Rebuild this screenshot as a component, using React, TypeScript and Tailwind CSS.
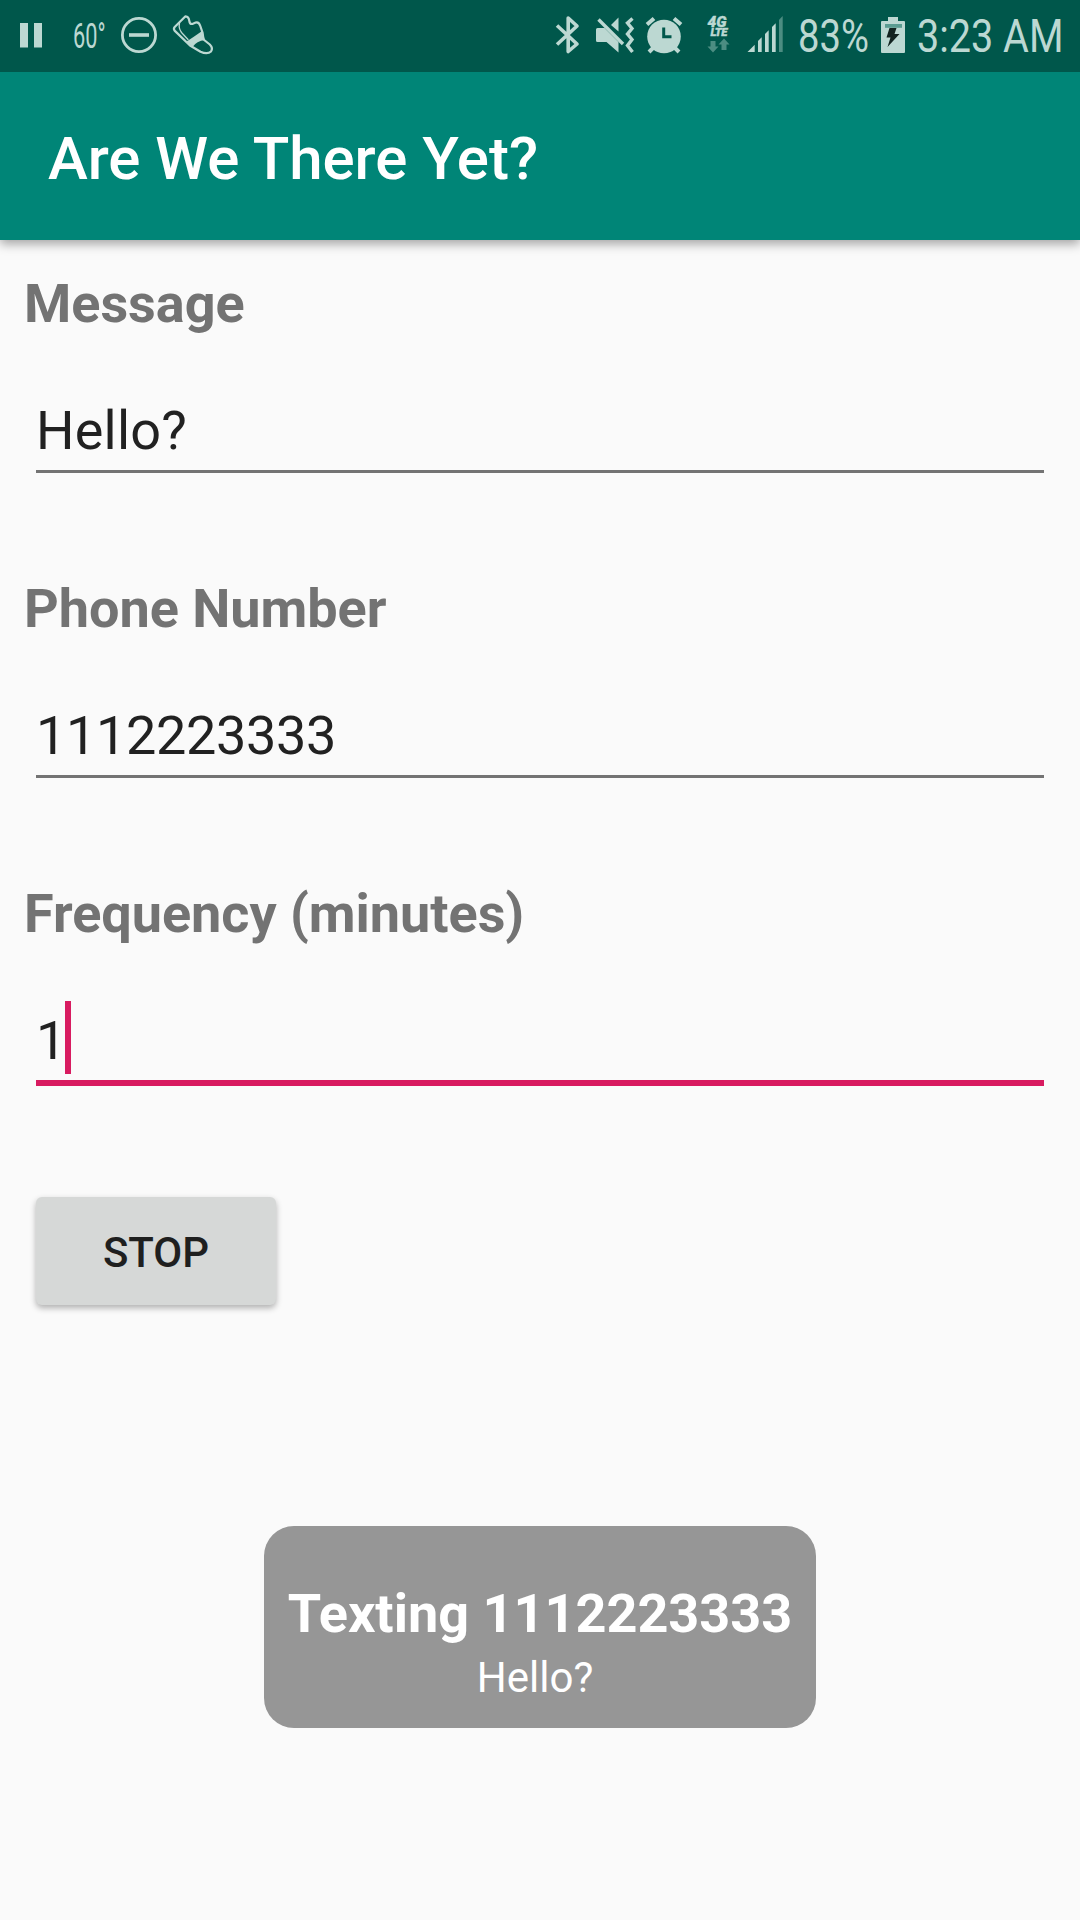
import React from "react";

function Icon({ x, w, className, children }: { x: number; w: number; className?: string; children: React.ReactNode }) {
  return (
    <svg className={"h-[72px] shrink-0 " + (className ?? "")} width={w} height={72} viewBox={`${x} 0 ${w} 72`} fill="#bcd8d2">
      {children}
    </svg>
  );
}

function StatusBar() {
  return (
    <header className="relative z-10 flex h-[72px] items-start justify-between bg-[#00574b] text-[#bcd8d2]">
      <div className="flex">
        <Icon x={0} w={73}>
          <rect x="20" y="23" width="8" height="24.5" />
          <rect x="34" y="23" width="8" height="24.5" />
        </Icon>
        <span className="block h-[72px] w-[45px] origin-left scale-x-[0.62] whitespace-nowrap text-[35px] leading-[73px]">60°</span>
        <Icon x={118} w={47}>
          <circle cx="139" cy="35" r="16.6" fill="none" stroke="#bcd8d2" strokeWidth="2.8" />
          <rect x="129" y="33.2" width="20" height="3.6" />
        </Icon>
        <Icon x={165} w={55}>
          <g fill="none" stroke="#bcd8d2" strokeWidth="2.2" strokeLinejoin="round" strokeLinecap="round">
            <path d="M185.5 16.3 L174.7 27 Q173.2 28.8 174.6 30.6 L190 45.5 L200.5 51.8 Q207.5 54.8 211 51.5 Q213.3 48 209.8 44.5 L203.5 39.5 L202.6 32.8 L200.3 26 Q198.8 21.6 195.6 22.6 L192.4 24 Q189.6 24.2 189.3 20.8 Q188.8 16.6 185.5 16.3Z" />
            <path strokeWidth="1.3" d="M179.5 23.5 Q178.3 28 181.5 32.5 L188 39.5" />
          </g>
          <path d="M202 31 L205 40 Q196.500 41 192.500 47 L186.500 41.5 Q193 37.500 202 31Z" />
        </Icon>
      </div>
      <div className="flex pr-[14px]">
        <Icon x={550} w={42}>
          <path fill="none" stroke="#bcd8d2" strokeWidth="3.6" strokeLinejoin="round" d="M557 25.5 L577 44 L568.2 51.5 V18 L577 26 L557 44.5" />
        </Icon>
        <Icon x={592} w={48}>
          <path d="M596 29.5 Q596 28 597.5 28 H604.5 L618.5 42 V52.5 L606.5 42 H597.5 Q596 42 596 40.5Z" />
          <path d="M611 25 L618.5 17.5 V31.5Z" />
          <path stroke="#bcd8d2" strokeWidth="3.4" d="M598.5 19.5 L623 44" />
          <path fill="none" stroke="#bcd8d2" strokeWidth="3.4" d="M632.5 18.5 L627.5 23 L632 28.5 L627.5 34 L632 39.5 L627.5 45.5 L632.5 52" />
        </Icon>
        <Icon x={640} w={60}>
          <circle cx="664" cy="36.5" r="16.8" />
          <path stroke="#bcd8d2" strokeWidth="4" d="M647 24.5 L654 18.5 M674 18.5 L681 24.5 M649 52 L654 47 M679 52 L674 47" />
          <path fill="none" stroke="#00574b" strokeWidth="3" d="M663.7 27.5 V36.7 H671.5" />
        </Icon>
        <Icon x={700} w={44}>
          <text fontFamily="Roboto" fontWeight="900" fontStyle="italic" stroke="#bcd8d2" strokeWidth="0.4">
            <tspan x="707.5" y="27" fontSize="15.5">4G</tspan>
            <tspan x="710.5" y="36" fontSize="11.3" letterSpacing="-0.5">LTE</tspan>
          </text>
          <g fill="#4c8d82">
            <path d="M710.5 41 H715.5 V46.5 H718.5 L713 52.5 L707.5 46.5 H710.5Z" />
            <path d="M721.5 50 H726.5 V44.5 H729.5 L724 38.5 L718.5 44.5 H721.5Z" />
          </g>
        </Icon>
        <Icon x={744} w={54}>
          <path d="M747.5 52 L754.7 44.7 V52Z M758 52 V41 L761.7 37.3 V52Z M765 52 V34 L768.7 30.3 V52Z M772 52 V27 L775.7 23.3 V52Z" />
          <path fill="#4c8d82" d="M779 52 V19.8 L782.7 16 V52Z" />
        </Icon>
        <span className="block h-[72px] w-[80px] origin-left scale-x-[0.83] text-[46px] leading-[73px]">83%</span>
        <Icon x={878} w={39}>
          <path d="M888 17 H898 V21 H904 Q905 21 905 22 V52 Q905 53 904 53 H882 Q881 53 881 52 V22 Q881 21 882 21 H888Z" />
          <rect x="885" y="24" width="17" height="3.8" fill="#5a9c91" />
          <path fill="#12231f" d="M889.5 28 H896.5 L894.5 34 H899.5 L887.5 47 L890.5 37.5 H886.5Z" />
        </Icon>
        <span className="block h-[72px] w-[149px] origin-left scale-x-[0.86] whitespace-nowrap text-[46px] leading-[73px]">3:23 AM</span>
      </div>
    </header>
  );
}

function Field({ label, value, focused = false, valueClass = "" }: { label: string; value: string; focused?: boolean; valueClass?: string }) {
  return (
    <section>
      <h2 className="px-6 text-[54px] leading-[63px] font-bold tracking-[-0.03px] text-[#737373]">{label}</h2>
      <div className={"mx-9 mt-16 flex h-[71px] box-content " + (focused ? "border-b-6 border-[#d81b60]" : "border-b-3 border-[#737373]")}>
        <span className={"text-[54px] leading-[63px] text-[#212121] " + valueClass}>{value}</span>
        {focused && <span className="-mt-2 -ml-px h-[73px] w-1.5 bg-[#d81b60]" />}
      </div>
    </section>
  );
}

export default function App() {
  return (
    <div className="relative h-[1920px] w-[1080px] overflow-hidden bg-[#fafafa] font-['Roboto',sans-serif]">
      <StatusBar />
      <div className="flex h-[168px] items-center bg-[#008577] px-12 pt-1.5 shadow-[0_4px_10px_rgba(0,0,0,0.35)]">
        <h1 className="text-[60px] leading-[70px] font-medium tracking-[-0.05px] text-white">Are We There Yet?</h1>
      </div>
      <main className="flex flex-col pt-8">
        <div className="flex flex-col gap-[104px]">
          <Field label="Message" value="Hello?" valueClass="tracking-[0.2px]" />
          <Field label="Phone Number" value="1112223333" valueClass="tracking-[-0.35px]" />
          <Field label="Frequency (minutes)" value="1" focused />
        </div>
        <button className="mt-[111px] ml-9 h-[108px] w-[240px] rounded-md bg-[#d6d8d7] pt-0.5 text-[42px] font-medium text-[#1f1f1f] shadow-[0_3px_6px_rgba(0,0,0,0.3)]">
          STOP
        </button>
      </main>
      <div className="absolute top-[1526px] left-[264px] flex h-[202px] w-[552px] flex-col items-center rounded-[30px] bg-[#969696] pt-[56px] text-white">
        <strong className="text-[54px] leading-[63px] font-bold whitespace-nowrap">Texting 1112223333</strong>
        <span className="pr-2.5 text-[42px] leading-[66px]">Hello?</span>
      </div>
    </div>
  );
}
